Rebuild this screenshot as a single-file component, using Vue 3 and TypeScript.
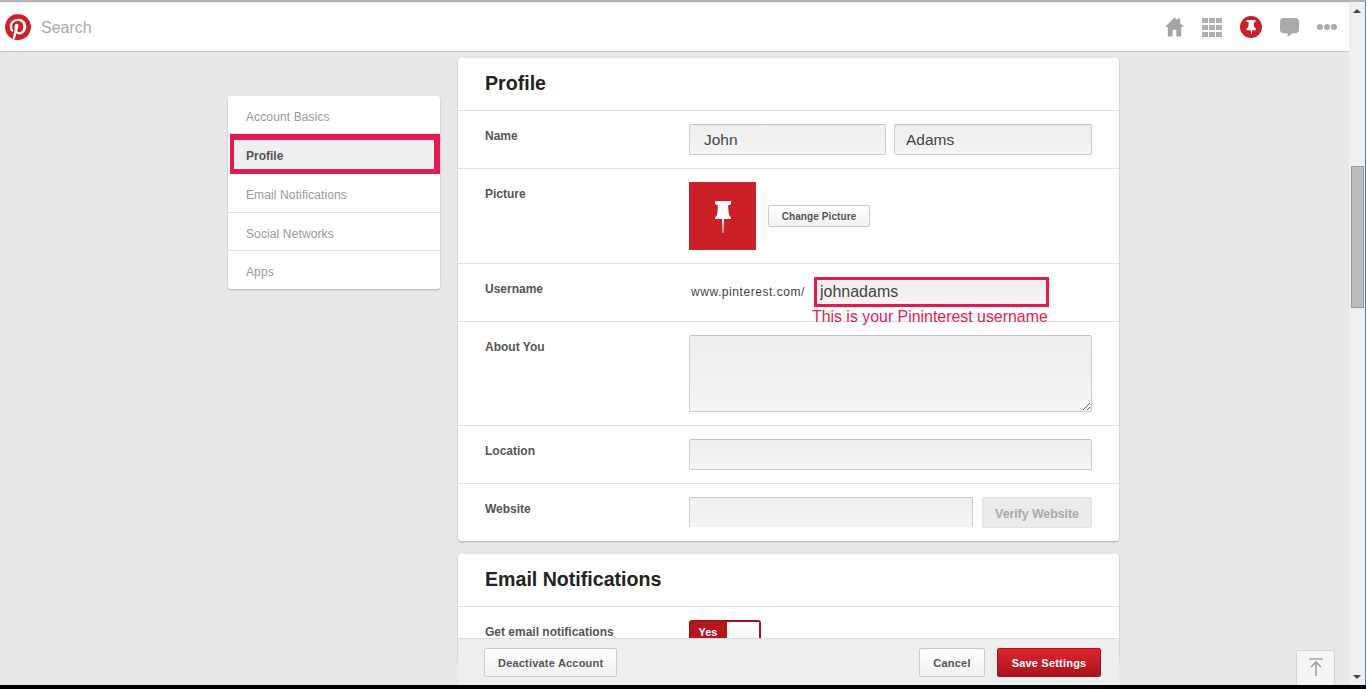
<template>
  <div class="screen">
    <div class="top-line"></div>
    <div class="window">
      <div class="page">
        <header class="header">
          <svg class="logo" viewBox="0 0 24 24">
            <circle cx="12" cy="12" r="11" fill="#fff" />
            <path fill="#cb2027" d="M12.017 0C5.396 0 .029 5.367.029 11.987c0 5.079 3.158 9.417 7.618 11.162-.105-.949-.199-2.403.041-3.439.219-.937 1.406-5.957 1.406-5.957s-.359-.72-.359-1.781c0-1.663.967-2.911 2.168-2.911 1.024 0 1.518.769 1.518 1.688 0 1.029-.653 2.567-.992 3.992-.285 1.193.6 2.165 1.775 2.165 2.128 0 3.768-2.245 3.768-5.487 0-2.861-2.063-4.869-5.008-4.869-3.41 0-5.409 2.562-5.409 5.199 0 1.033.394 2.143.889 2.741.099.12.112.225.085.345-.09.375-.293 1.199-.334 1.363-.053.225-.172.271-.401.165-1.495-.69-2.433-2.878-2.433-4.646 0-3.776 2.748-7.252 7.92-7.252 4.158 0 7.392 2.967 7.392 6.923 0 4.135-2.607 7.462-6.233 7.462-1.214 0-2.354-.629-2.758-1.379l-.749 2.848c-.269 1.045-1.004 2.352-1.498 3.146 1.123.345 2.306.535 3.55.535 6.607 0 11.985-5.365 11.985-11.987C23.97 5.39 18.592.026 11.985.026L12.017 0z" />
          </svg>
          <span class="search">Search</span>
          <nav class="head-icons">
            <svg class="ico-home" viewBox="0 0 20 20">
              <path fill="#a3a3a3" d="M10 0 0 10h3v10h5v-7h4v7h5V10h3l-4-4V1h-3v2z" />
            </svg>
            <div class="ico-grid">
              <i v-for="n in 9" :key="n"></i>
            </div>
            <svg class="ico-pin" viewBox="0 0 22 22">
              <circle cx="11" cy="11" r="11" fill="#cb2027" />
              <path fill="#fff" d="M6.500 4h9v2l-1.700.4.400 4.600 1.800 1.800v1.400h-3.700l-.6 4.300h-.4l-.6-4.300H6.500v-1.400L8.300 11l.4-4.600L6.500 6z" />
            </svg>
            <svg class="ico-chat" viewBox="0 0 20 20">
              <path fill="#aaa" d="M4 0h12a4 4 0 0 1 4 4v8a4 4 0 0 1-4 4h-3l-5 4v-4H4a4 4 0 0 1-4-4V4a4 4 0 0 1 4-4z" />
            </svg>
            <div class="ico-dots"><i></i><i></i><i></i></div>
          </nav>
        </header>

        <div class="body">
          <aside class="side">
            <a
              v-for="item in navItems"
              :key="item"
              class="side-item"
              :class="{ active: item === 'Profile' }"
            >{{ item }}</a>
          </aside>

          <main class="content">
            <section class="card">
              <h2 class="card-title">Profile</h2>
              <div class="row">
                <label class="row-label">Name</label>
                <div class="row-field">
                  <input class="inp inp-first" value="John" readonly />
                  <input class="inp inp-last" value="Adams" readonly />
                </div>
              </div>
              <div class="row">
                <label class="row-label">Picture</label>
                <div class="row-field center">
                  <div class="avatar">
                    <svg viewBox="0 0 16 32" width="16" height="32">
                      <path fill="#fff" d="M0 0h16v3l-3 1.500.9 9.500L16 16.500V18H9l-.6 14h-.8L7 18H0v-1.500L2.100 14 3 4.500 0 3z" />
                    </svg>
                  </div>
                  <button class="btn btn-small">Change Picture</button>
                </div>
              </div>
              <div class="row">
                <label class="row-label">Username</label>
                <div class="row-field center username-field">
                  <span class="url-prefix">www.pinterest.com/</span>
                  <div class="username-wrap">
                    <input class="inp inp-mark" value="johnadams" readonly />
                    <span class="username-note">This is your Pininterest username</span>
                  </div>
                </div>
              </div>
              <div class="row">
                <label class="row-label">About You</label>
                <div class="row-field">
                  <textarea class="inp area" readonly></textarea>
                </div>
              </div>
              <div class="row">
                <label class="row-label">Location</label>
                <div class="row-field">
                  <input class="inp" readonly />
                </div>
              </div>
              <div class="row">
                <label class="row-label">Website</label>
                <div class="row-field site-field">
                  <div class="site-clip"><input class="inp" readonly /></div>
                  <button class="btn btn-verify">Verify Website</button>
                </div>
              </div>
            </section>

            <section class="card">
              <h2 class="card-title">Email Notifications</h2>
              <div class="row">
                <label class="row-label">Get email notifications</label>
                <div class="row-field">
                  <div class="toggle">
                    <span class="toggle-on">Yes</span>
                    <span class="toggle-knob"></span>
                  </div>
                </div>
              </div>
            </section>
          </main>
        </div>

        <div class="action-bar">
          <button class="btn btn-bar">Deactivate Account</button>
          <span class="bar-gap"></span>
          <button class="btn btn-bar btn-cancel">Cancel</button>
          <button class="btn btn-save">Save Settings</button>
        </div>

        <button class="to-top" aria-label="Back to top">
          <svg viewBox="0 0 14 18" width="14" height="18">
            <path fill="none" stroke="#a3a3a3" stroke-width="1.600" d="M0 1h14M7 18V4M2 9l5-5 5 5" />
          </svg>
        </button>
      </div>

      <div class="scrollbar">
        <span class="arrow up"></span>
        <div class="track"><div class="thumb"></div></div>
        <span class="arrow down"></span>
      </div>
      <div class="edge"></div>
    </div>
    <div class="bottom-line"></div>
  </div>
</template>

<script setup lang="ts">
const navItems: string[] = [
  'Account Basics',
  'Profile',
  'Email Notifications',
  'Social Networks',
  'Apps'
];
</script>

<style>
html,
body {
  margin: 0;
  height: 100%;
  overflow: hidden;
}
</style>

<style scoped>
.screen {
  display: flex;
  flex-direction: column;
  height: 689px;
  font-family: 'Liberation Sans', Arial, sans-serif;
  background: #000;
}

.top-line {
  height: 2px;
  flex: none;
  background: #b5b5b5;
}

.bottom-line {
  height: 4px;
  flex: none;
  background: #000;
}

.window {
  flex: 1;
  min-height: 0;
  display: flex;
}

.page {
  position: relative;
  flex: 1;
  min-width: 0;
  display: flex;
  flex-direction: column;
  overflow: hidden;
  background: #e8e8e8;
}

/* header */
.header {
  flex: none;
  height: 48px;
  display: flex;
  align-items: center;
  padding: 0 12px 0 5px;
  background: #fff;
  border-top: 1px solid #eee;
  border-bottom: 1px solid #c8c8c8;
}

.logo {
  width: 26px;
  height: 26px;
}

.search {
  margin: 2px 0 0 10px;
  font-size: 16px;
  color: #aaa;
}

.head-icons {
  margin-left: auto;
  display: flex;
  align-items: center;
}

.ico-home {
  width: 19px;
  height: 20px;
}

.ico-grid {
  margin-left: 18px;
  width: 20px;
  height: 19px;
  display: grid;
  grid-template-columns: repeat(3, 6px);
  grid-template-rows: repeat(3, 5px);
  gap: 2px 1px;
}

.ico-grid i {
  background: #b0b0b0;
}

.ico-pin {
  margin-left: 18px;
  width: 22px;
  height: 22px;
}

.ico-chat {
  margin-left: 18px;
  width: 19px;
  height: 19px;
}

.ico-dots {
  margin-left: 18px;
  display: flex;
  gap: 1px;
}

.ico-dots i {
  width: 6px;
  height: 6px;
  border-radius: 50%;
  background: #aaa;
}

/* body */
.body {
  flex: 1;
  min-height: 0;
  display: flex;
  align-items: flex-start;
  gap: 18px;
  padding-left: 228px;
}

.side {
  flex: none;
  width: 212px;
  margin-top: 44px;
  background: #fff;
  border-radius: 3px;
  box-shadow: 0 1px 2px rgba(0, 0, 0, 0.25);
}

.side-item {
  position: relative;
  display: block;
  height: 37px;
  padding-left: 18px;
  font-size: 12px;
  letter-spacing: 0.12px;
  line-height: 42px;
  color: #999;
  border-bottom: 1px solid #e2e2e2;
}

.side-item:last-child {
  border-bottom: 0;
  height: 38px;
}

.side-item.active {
  height: 40px;
  font-weight: bold;
  letter-spacing: 0;
  line-height: 44px;
  color: #555;
  background: linear-gradient(90deg, #fff 2px, #efefef 2px);
  border-bottom: 0;
}

.side-item.active + .side-item {
  height: 38px;
}

.side-item.active::after {
  content: '';
  position: absolute;
  inset: 0 0 0 2px;
  border-style: solid;
  border-color: #e31c4f;
  border-width: 6px 6px 5px 4px;
}

.content {
  flex: none;
  width: 661px;
  margin-top: 6px;
  display: flex;
  flex-direction: column;
  gap: 13px;
}

.card {
  background: #fff;
  border-radius: 3px;
  box-shadow: 0 1px 2px rgba(0, 0, 0, 0.25);
}

.card-title {
  margin: 0;
  height: 52px;
  padding-left: 27px;
  font-size: 19.6px;
  font-weight: bold;
  line-height: 50px;
  color: #222;
}

.row {
  display: flex;
  padding: 13px 27px;
  border-top: 1px solid #e2e2e2;
}

.row-label {
  flex: none;
  width: 204px;
  padding-top: 4px;
  font-size: 12px;
  font-weight: bold;
  line-height: 16px;
  color: #555;
}

.row-field {
  flex: 1;
  min-width: 0;
  display: flex;
  gap: 8px;
}

.row-field.center {
  align-items: center;
}

.inp {
  flex: 1;
  min-width: 0;
  width: 100%;
  height: 31px;
  box-sizing: border-box;
  padding: 0 14px;
  font-family: 'Liberation Sans', Arial, sans-serif;
  font-size: 16px;
  color: #444;
  background: linear-gradient(#eee, #f5f5f5);
  border: 1px solid #ccc;
  border-top-color: #c4c4c4;
  border-radius: 2px;
  outline: 0;
}

.inp-first {
  flex: none;
  width: 197px;
  font-size: 15.5px;
}

.inp-last {
  padding-left: 11px;
  font-size: 15.5px;
}

.area {
  display: block;
  height: 77px;
  padding: 6px 14px;
}

.avatar {
  width: 67px;
  height: 68px;
  flex: none;
  display: flex;
  align-items: center;
  justify-content: center;
  padding-top: 2px;
  box-sizing: border-box;
  background: #cb2027;
}

.btn {
  font-family: 'Liberation Sans', Arial, sans-serif;
  font-weight: bold;
  color: #555;
  background: linear-gradient(#fff, #f1f1f1);
  border: 1px solid #ccc;
  border-radius: 2px;
  box-sizing: border-box;
  padding: 0;
}

.btn-small {
  margin-left: 4px;
  width: 102px;
  height: 22px;
  font-size: 10px;
  letter-spacing: 0.1px;
}

.username-field {
  height: 31px;
}

.url-prefix {
  margin-left: 2px;
  padding-bottom: 2px;
  font-size: 12px;
  letter-spacing: 0.55px;
  color: #444;
}

.username-wrap {
  position: relative;
  align-self: flex-start;
  margin-left: 1px;
  width: 235px;
}

.inp-mark {
  display: block;
  height: 30px;
  padding: 0 3px;
  border: 3px solid #e31c4f;
  border-radius: 0;
}

.username-note {
  position: absolute;
  left: -2px;
  top: 29px;
  font-size: 15.9px;
  line-height: 22px;
  white-space: nowrap;
  color: #e31c4f;
}

.site-field {
  gap: 9px;
}

.site-clip {
  flex: 1;
  height: 30px;
  overflow: hidden;
}

.btn-verify {
  flex: none;
  width: 110px;
  height: 31px;
  padding-top: 2px;
  font-size: 12.5px;
  letter-spacing: -0.1px;
  color: #aaa;
  background: #ebebeb;
  border-color: #e2e2e2;
}

.toggle {
  display: flex;
  width: 72px;
  height: 30px;
  box-sizing: border-box;
  border: 2px solid #a5141c;
  border-radius: 3px;
  background: #fff;
}

.toggle-on {
  width: 36px;
  padding-right: 2px;
  box-sizing: border-box;
  font-size: 11px;
  font-weight: bold;
  line-height: 20px;
  text-align: center;
  color: #fff;
  background: #b5161e;
}

.toggle-knob {
  flex: 1;
  background: linear-gradient(#fff, #f2f2f2);
}

/* bars over the content */
.action-bar {
  position: absolute;
  left: 458px;
  bottom: 0;
  width: 661px;
  height: 47px;
  box-sizing: border-box;
  display: flex;
  align-items: flex-start;
  gap: 12px;
  padding: 9px 18px 0 26px;
  background: #eee;
  border-top: 1px solid #ddd;
}

.bar-gap {
  flex: 1;
}

.btn-bar {
  height: 29px;
  padding: 0 13px;
  font-size: 11px;
  letter-spacing: 0.2px;
}

.btn-cancel {
  width: 66px;
  padding: 0;
}

.btn-save {
  height: 29px;
  width: 104px;
  font-size: 11px;
  letter-spacing: 0.2px;
  color: #fff;
  background: linear-gradient(#e0252f, #a8141b);
  border-color: #a5141c;
}

.to-top {
  position: absolute;
  left: 1296px;
  bottom: 0;
  width: 39px;
  height: 35px;
  padding: 0 0 2px;
  display: flex;
  align-items: center;
  justify-content: center;
  background: #f5f5f5;
  border: 1px solid #d5d5d5;
  border-bottom: 0;
  border-radius: 2px 2px 0 0;
}

/* scrollbar */
.scrollbar {
  flex: none;
  width: 16px;
  display: flex;
  flex-direction: column;
  background: #f0f0f0;
}

.track {
  flex: 1;
  padding: 147px 1px 0 2px;
}

.thumb {
  height: 142px;
  box-sizing: border-box;
  background: #bcbcbc;
  border: 1px solid #999;
}

.arrow {
  flex: none;
  height: 17px;
  display: flex;
  align-items: center;
  justify-content: center;
}

.arrow::before {
  content: '';
  border-left: 4px solid transparent;
  border-right: 4px solid transparent;
}

.arrow.up::before {
  border-bottom: 4px solid #444;
}

.arrow.down::before {
  border-top: 4px solid #444;
}

.edge {
  flex: none;
  width: 1px;
  background: #2b8fb5;
}
</style>
